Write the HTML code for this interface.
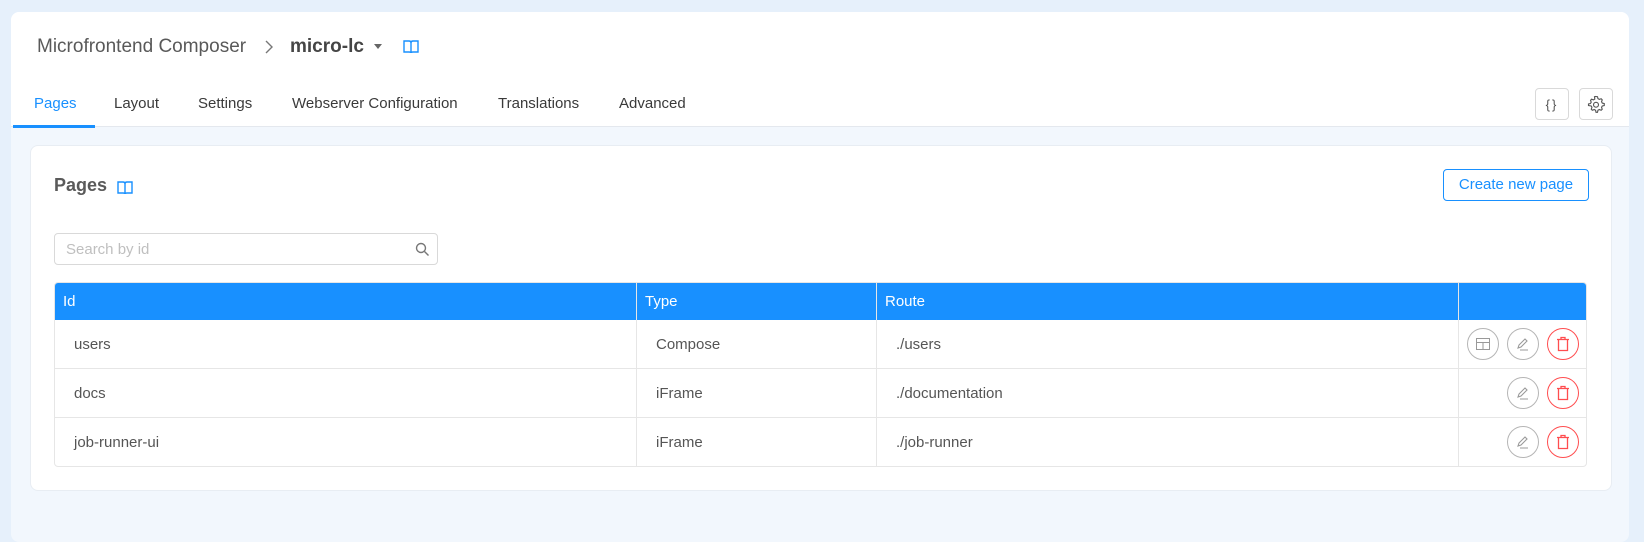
<!DOCTYPE html>
<html><head><style>
*{box-sizing:border-box;margin:0;padding:0}
body{width:1644px;height:533px;background:#e6f0fb;font-family:"Liberation Sans",sans-serif;position:relative;overflow:hidden;color:#595959}
.a{position:absolute}
.card{left:11px;top:12px;width:1618px;height:530px;background:#f2f7fd;border-radius:8px;overflow:hidden}
.head{left:0;top:0;width:1618px;height:115px;background:#fff;border-bottom:1px solid #e4e8ee}
.tabs span{position:absolute;top:83px;font-size:15px;color:#3a3a3a}
.ib{width:34px;height:32px;border:1px solid #d9d9d9;border-radius:4px;background:#fff;display:flex;align-items:center;justify-content:center}
.inner{left:19px;top:133px;width:1582px;height:346px;background:#fff;border-radius:8px;border:1px solid #e8edf3}
.cell{position:absolute;font-size:15px;color:#555}
.hd{position:absolute;font-size:15px;color:#fff;top:293px}
.circ{position:absolute;width:32px;height:32px;border-radius:50%;border:1px solid #b5b5b5;display:flex;align-items:center;justify-content:center}
.red{border-color:#ff4d4f}
</style></head><body>
<div class="a card">
 <div class="a head">
  <div class="a" style="left:26px;top:24px;font-size:19px;color:#595959">Microfrontend Composer</div>
  <svg class="a" style="left:253px;top:28px" width="10" height="14" viewBox="0 0 10 14"><path d="M2 1l6 6-6 6" fill="none" stroke="#777" stroke-width="1.4"/></svg>
  <div class="a" style="left:279px;top:24px;font-size:19px;font-weight:bold;color:#454545">micro-lc</div>
  <svg class="a" style="left:363px;top:32px" width="8" height="5"><path d="M0 0h8L4 5z" fill="#666"/></svg>
  <svg class="a" style="left:392px;top:27px" width="16" height="15" viewBox="0 0 16 15"><path d="M1 2h5q2 0 2 2v10q0-1-2-1H1zM15 2h-5q-2 0-2 2v10q0-1 2-1h5z" fill="none" stroke="#1890ff" stroke-width="1.4"/></svg>
  <div class="tabs">
   <span style="left:23px;color:#1890ff">Pages</span>
   <span style="left:103px">Layout</span>
   <span style="left:187px">Settings</span>
   <span style="left:281px">Webserver Configuration</span>
   <span style="left:487px">Translations</span>
   <span style="left:608px">Advanced</span>
  </div>
  <div class="a" style="left:2px;top:113px;width:82px;height:3px;background:#1890ff"></div>
  <div class="a ib" style="left:1524px;top:76px;font-size:13px;color:#555;letter-spacing:2px">{}</div>
  <div class="a ib" style="left:1568px;top:76px"><svg width="18" height="18" viewBox="0 0 24 24"><path d="M12 2l2 .3.6 2.6 1.8 1 2.5-.9 1.4 1.5-.9 2.5 1 1.8 2.6.6V14l-2.6.6-1 1.8.9 2.5-1.4 1.4-2.5-.9-1.800 1-.6 2.6h-2l-.6-2.6-1.8-1-2.5.9-1.4-1.4.9-2.5-1-1.8L2 14v-2l2.6-.6 1-1.8-.9-2.5 1.4-1.5 2.5.9 1.8-1L10 2.3z" fill="none" stroke="#555" stroke-width="1.5"/><circle cx="12" cy="13" r="3.3" fill="none" stroke="#555" stroke-width="1.5"/></svg></div>
 </div>
 <div class="a inner">
  <div class="a" style="left:23px;top:29px;font-size:18px;font-weight:bold;color:#5a5a5a">Pages</div>
  <svg class="a" style="left:86px;top:34px" width="16" height="15" viewBox="0 0 16 15"><path d="M1 2h5q2 0 2 2v10q0-1-2-1H1zM15 2h-5q-2 0-2 2v10q0-1 2-1h5z" fill="none" stroke="#1890ff" stroke-width="1.4"/></svg>
  <div class="a" style="left:1412px;top:23px;width:146px;height:32px;border:1px solid #1890ff;border-radius:4px;color:#1890ff;font-size:15px;text-align:center;line-height:30px">Create new page</div>
  <div class="a" style="left:23px;top:87px;width:384px;height:32px;border:1px solid #d9d9d9;border-radius:4px;font-size:15px;color:#bfbfbf;padding:7px 11px">Search by id</div>
  <svg class="a" style="left:384px;top:96px" width="15" height="15" viewBox="0 0 15 15"><circle cx="6" cy="6" r="4.5" fill="none" stroke="#777" stroke-width="1.4"/><path d="M9.5 9.5l4 4" stroke="#777" stroke-width="1.4"/></svg>
 </div>
</div>
<div class="a" style="left:54px;top:282px;width:1533px;height:185px;border:1px solid #e6e6e6;border-radius:4px;overflow:hidden;background:#fff">
 <div class="a" style="left:0;top:0;width:1533px;height:37px;background:#1890ff"></div>
 <div class="a" style="left:0;top:85px;width:1533px;height:1px;background:#e6e6e6"></div>
 <div class="a" style="left:0;top:134px;width:1533px;height:1px;background:#e6e6e6"></div>
 <div class="a" style="left:581px;top:0;width:1px;height:185px;background:#e6e6e6"></div>
 <div class="a" style="left:821px;top:0;width:1px;height:185px;background:#e6e6e6"></div>
 <div class="a" style="left:1403px;top:0;width:1px;height:185px;background:#e6e6e6"></div>
</div>
<div class="hd" style="left:63px">Id</div>
<div class="hd" style="left:645px">Type</div>
<div class="hd" style="left:885px">Route</div>
<div class="cell" style="left:74px;top:336px">users</div>
<div class="cell" style="left:656px;top:336px">Compose</div>
<div class="cell" style="left:896px;top:336px">./users</div>
<div class="cell" style="left:74px;top:385px">docs</div>
<div class="cell" style="left:656px;top:385px">iFrame</div>
<div class="cell" style="left:896px;top:385px">./documentation</div>
<div class="cell" style="left:74px;top:434px">job-runner-ui</div>
<div class="cell" style="left:656px;top:434px">iFrame</div>
<div class="cell" style="left:896px;top:434px">./job-runner</div>
<div class="circ" style="left:1467px;top:328px"><svg width="16" height="14"><rect x="1.5" y="1.5" width="13" height="11" fill="none" stroke="#999"/><path d="M1.5 5.5h13M8 5.5v7" stroke="#999"/></svg></div>
<div class="circ" style="left:1507px;top:328px"><svg width="16" height="16"><path d="M3 12l1-3 6-6 2 2-6 6zM5 14h8" fill="none" stroke="#999" stroke-width="1.1"/></svg></div>
<div class="circ red" style="left:1547px;top:328px"><svg width="14" height="16"><path d="M1 3.5h12M5 3.5V1.5h4v2M2.5 3.5v11h9v-11" fill="none" stroke="#ff4d4f" stroke-width="1.3"/></svg></div>
<div class="circ" style="left:1507px;top:377px"><svg width="16" height="16"><path d="M3 12l1-3 6-6 2 2-6 6zM5 14h8" fill="none" stroke="#999" stroke-width="1.1"/></svg></div>
<div class="circ red" style="left:1547px;top:377px"><svg width="14" height="16"><path d="M1 3.5h12M5 3.5V1.5h4v2M2.5 3.5v11h9v-11" fill="none" stroke="#ff4d4f" stroke-width="1.3"/></svg></div>
<div class="circ" style="left:1507px;top:426px"><svg width="16" height="16"><path d="M3 12l1-3 6-6 2 2-6 6zM5 14h8" fill="none" stroke="#999" stroke-width="1.1"/></svg></div>
<div class="circ red" style="left:1547px;top:426px"><svg width="14" height="16"><path d="M1 3.5h12M5 3.5V1.5h4v2M2.5 3.5v11h9v-11" fill="none" stroke="#ff4d4f" stroke-width="1.3"/></svg></div>
</body></html>
